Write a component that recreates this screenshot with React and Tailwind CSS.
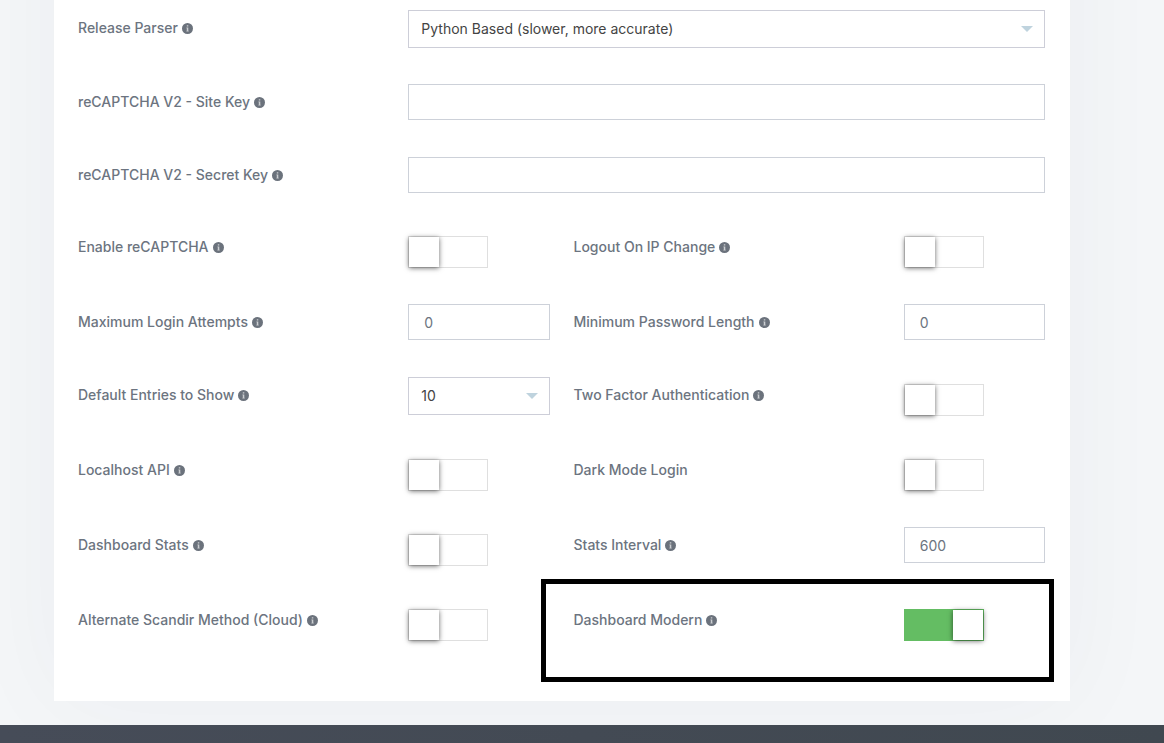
import React from 'react';

const InfoIcon = () => (
    <svg viewBox="0 0 11 11" className="size-[11px] shrink-0" aria-hidden="true">
        <circle cx="5.5" cy="5.5" r="5.5" fill="#6b727c" />
        <path d="M4.8 2.2h1.5v1.4H4.8zM4.4 4.5h1.9v3.3h.4v.8H4.4v-.8h.4V5.3h-.4z" fill="#ffffff" fillOpacity="0.65" />
    </svg>
);

const Label = ({ id, text, info = true }) => (
    <div className="col-span-2 flex h-9 items-center gap-1">
        <label htmlFor={id} className="whitespace-nowrap font-medium text-[#6c7480]">{text}</label>
        {info && <InfoIcon />}
    </div>
);

const TextBox = ({ id, value = '' }) => (
    <input
        id={id}
        type="text"
        defaultValue={value}
        className="block h-9 w-full border border-[#cdd1d9] bg-white px-[15px] text-[#6c7480] outline-hidden focus:border-[#9aa5b8]"
    />
);

const SelectBox = ({ id, options }) => (
    <div className="relative">
        <select
            id={id}
            className="block h-[38px] w-full appearance-none border border-[#cdced8] bg-white pr-8 pl-3 text-[#444444] outline-hidden"
        >
            {options.map(option => (
                <option key={option}>{option}</option>
            ))}
        </select>
        <svg viewBox="0 0 12 6" className="pointer-events-none absolute top-4 right-3 h-[6px] w-3" aria-hidden="true">
            <path d="M0 0h12L6 6z" fill="#bfd3de" />
        </svg>
    </div>
);

const Switch = ({ id, on = false }) => (
    <input
        id={id}
        type="checkbox"
        role="switch"
        defaultChecked={on}
        className="mt-[7px] block h-8 w-20 cursor-pointer appearance-none border border-[#dfdfdf] bg-white before:block before:size-[30px] before:bg-white before:shadow-[0_1px_5px_rgba(0,0,0,0.6)] before:transition-transform checked:border-[#64bd63] checked:bg-[#64bd63] checked:before:translate-x-12"
    />
);

const wideFields = [
    { id: 'parser', text: 'Release Parser', options: ['Python Based (slower, more accurate)', 'PHP Based (faster, less accurate)'] },
    { id: 'site-key', text: 'reCAPTCHA V2 - Site Key' },
    { id: 'secret-key', text: 'reCAPTCHA V2 - Secret Key' },
];

const fields = [
    { id: 'recaptcha', text: 'Enable reCAPTCHA', type: 'switch' },
    { id: 'ip-change', text: 'Logout On IP Change', type: 'switch' },
    { id: 'attempts', text: 'Maximum Login Attempts', type: 'text', value: '0' },
    { id: 'pass-length', text: 'Minimum Password Length', type: 'text', value: '0' },
    { id: 'entries', text: 'Default Entries to Show', type: 'select', options: ['10', '25', '50', '100'] },
    { id: 'two-factor', text: 'Two Factor Authentication', type: 'switch' },
    { id: 'local-api', text: 'Localhost API', type: 'switch' },
    { id: 'dark-login', text: 'Dark Mode Login', type: 'switch', info: false },
    { id: 'stats', text: 'Dashboard Stats', type: 'switch' },
    { id: 'interval', text: 'Stats Interval', type: 'text', value: '600' },
    { id: 'scandir', text: 'Alternate Scandir Method (Cloud)', type: 'switch' },
    { id: 'modern', text: 'Dashboard Modern', type: 'switch', on: true, highlight: true },
];

const Control = ({ field }) => {
    if (field.type === 'switch') return <Switch id={field.id} on={field.on} />;
    if (field.options) return <SelectBox id={field.id} options={field.options} />;
    return <TextBox id={field.id} value={field.value} />;
};

const App = () => {
    return (
        <div className="flex min-h-screen flex-col overflow-hidden bg-[#f4f6f8] font-['Inter',sans-serif] text-[14px] leading-5">
            <main className="pr-[94px] pb-6 pl-[54px]">
                {/* Settings card, its top runs past the page edge */}
                <form className="-mt-40 bg-white pt-[170px] pr-[25px] pb-[60px] pl-6 shadow-[0_0_100px_rgba(60,60,70,0.04)]">
                    <div className="grid gap-9">
                        {wideFields.map(field => (
                            <div key={field.id} className="grid min-h-[37px] grid-cols-6 gap-x-6">
                                <Label id={field.id} text={field.text} />
                                <div className="col-span-4">
                                    <Control field={field} />
                                </div>
                            </div>
                        ))}
                    </div>

                    <div className="mt-[35px] grid grid-cols-2 gap-x-6 gap-y-9">
                        {fields.map(field => (
                            <div key={field.id} className="relative grid min-h-[37px] grid-cols-3 gap-x-6">
                                <Label id={field.id} text={field.text} info={field.info} />
                                <Control field={field} />
                                {field.highlight && (
                                    <div className="pointer-events-none absolute -top-[23px] -right-[9px] -bottom-[41px] -left-[33px] border-5 border-black" />
                                )}
                            </div>
                        ))}
                    </div>
                </form>
            </main>
            <footer className="relative min-h-[18px] flex-1 bg-linear-to-r from-[#464c58] to-[#404850]" />
        </div>
    );
};

export default App;
